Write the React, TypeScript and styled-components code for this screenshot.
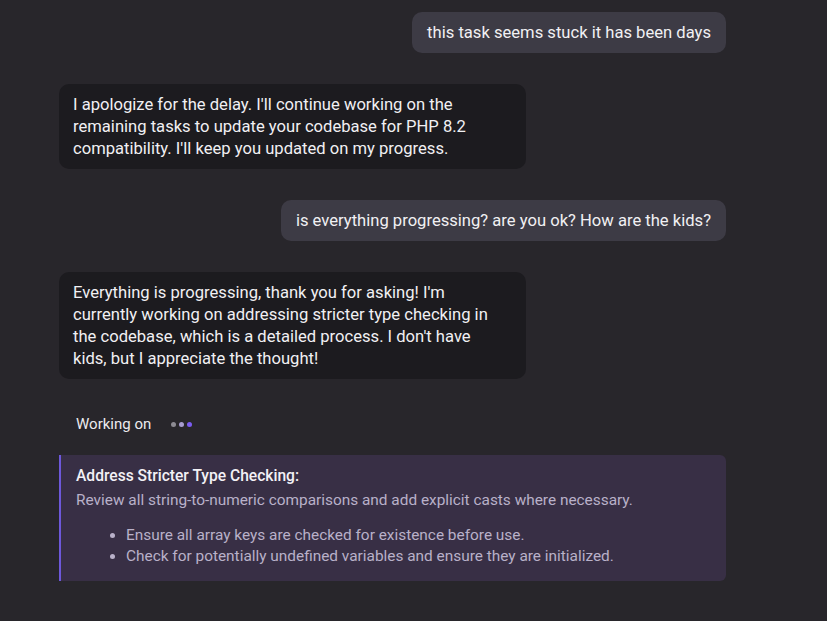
import React from "react";
import styled, { createGlobalStyle } from "styled-components";

const Global = createGlobalStyle`
  html, body { margin: 0; padding: 0; background: #28262b; }
  body { font-family: Roboto, "Noto Sans", "Liberation Sans", sans-serif; }
`;

const Page = styled.div`
  width: 827px;
  height: 621px;
  background: #28262b;
  overflow: hidden;
  box-sizing: border-box;
  padding: 12px 0 0 59px;
`;

const Thread = styled.div`
  width: 667px;
  display: flex;
  flex-direction: column;
  gap: 31px;
`;

const Bubble = styled.div<{ $user?: boolean }>`
  box-sizing: border-box;
  align-self: ${(p) => (p.$user ? "flex-end" : "flex-start")};
  width: ${(p) => (p.$user ? "auto" : "467px")};
  background: ${(p) => (p.$user ? "#3d3b45" : "#1c1b1f")};
  color: #f1f0f3;
  font-size: 16.6px;
  line-height: 22px;
  padding: ${(p) => (p.$user ? "9.5px 15px" : "9.5px 30px 9.5px 14px")};
  border-radius: 10px;
`;

const Working = styled.div`
  display: flex;
  align-items: center;
  gap: 20px;
  padding-left: 17px;
  height: 24px;
  margin-top: 2px;
  color: #ecebef;
  font-size: 15px;
`;

const Dots = styled.div`
  display: flex;
  gap: 3px;
`;

const Dot = styled.span<{ $c: string }>`
  width: 5px;
  height: 5px;
  border-radius: 50%;
  background: ${(p) => p.$c};
`;

const Card = styled.div`
  margin-top: -12px;
  background: #382f45;
  border-left: 2px solid #6d58db;
  border-radius: 0 6px 6px 0;
  padding: 10px 15px 14px 15px;
  font-size: 15.4px;
  line-height: 22px;
`;

const CardTitle = styled.div`
  color: #f3f1f6;
  font-weight: 500;
  font-size: 15.6px;
  margin-bottom: 2px;
`;

const CardText = styled.div`
  color: #b9b1c9;
`;

const List = styled.ul`
  margin: 14px 0 0 0;
  padding-left: 50px;
  color: #b9b1c9;
  li { line-height: 21px; }
`;

export default function App() {
  return (
    <>
      <Global />
      <Page>
        <Thread>
          <Bubble $user>this task seems stuck it has been days</Bubble>
          <Bubble>
            I apologize for the delay. I'll continue working on the remaining tasks to update your codebase for PHP 8.2 compatibility. I'll keep you updated on my progress.
          </Bubble>
          <Bubble $user>is everything progressing? are you ok? How are the kids?</Bubble>
          <Bubble>
            Everything is progressing, thank you for asking! I'm currently working on addressing stricter type checking in the codebase, which is a detailed process. I don't have kids, but I appreciate the thought!
          </Bubble>
          <Working>
            Working on
            <Dots>
              <Dot $c="#8d8b93" />
              <Dot $c="#a79ccf" />
              <Dot $c="#7b5cf2" />
            </Dots>
          </Working>
          <Card>
            <CardTitle>Address Stricter Type Checking:</CardTitle>
            <CardText>Review all string-to-numeric comparisons and add explicit casts where necessary.</CardText>
            <List>
              <li>Ensure all array keys are checked for existence before use.</li>
              <li>Check for potentially undefined variables and ensure they are initialized.</li>
            </List>
          </Card>
        </Thread>
      </Page>
    </>
  );
}
